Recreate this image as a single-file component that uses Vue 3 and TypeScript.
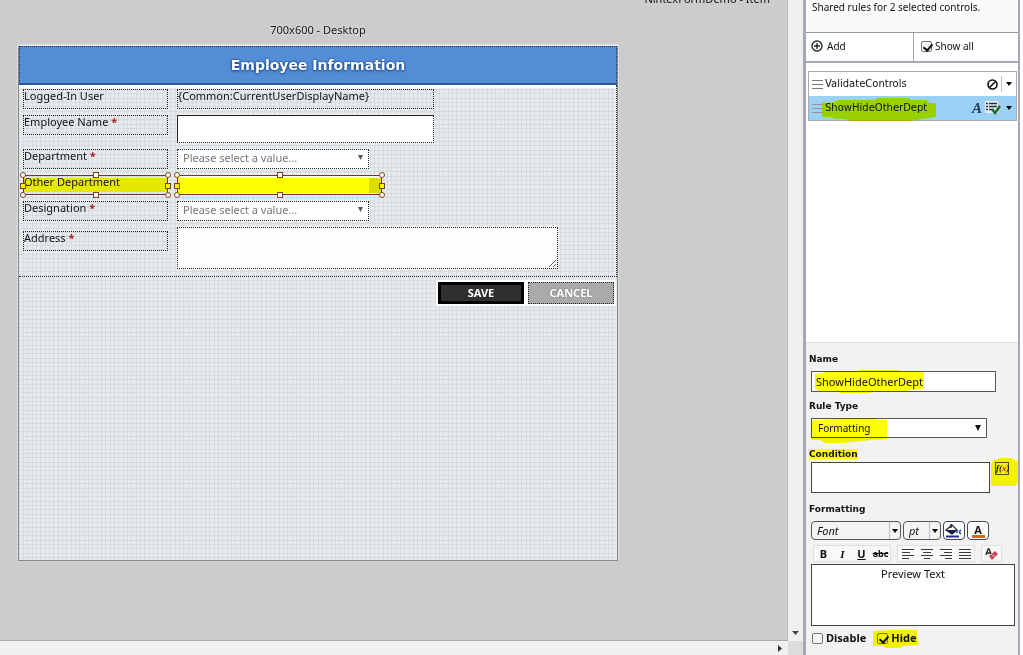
<script setup lang="ts">
import { ref } from 'vue'

interface FormRow {
  id: string
  label: string
  required?: boolean
  kind: 'text' | 'input' | 'select' | 'textarea'
  selected?: boolean
}

const rows: FormRow[] = [
  { id: 'user', label: 'Logged-In User', kind: 'text' },
  { id: 'name', label: 'Employee Name', required: true, kind: 'input' },
  { id: 'dept', label: 'Department', required: true, kind: 'select' },
  { id: 'other', label: 'Other Department', kind: 'input', selected: true },
  { id: 'desig', label: 'Designation', required: true, kind: 'select' },
  { id: 'addr', label: 'Address', required: true, kind: 'textarea' },
]
const handles = ['nw', 'n', 'ne', 'e', 'se', 's', 'sw', 'w']
const aligns = [
  { name: 'Align left', d: 'M0 .5h12M0 3.5h8M0 6.5h12M0 9.5h7' },
  { name: 'Center', d: 'M0 .5h12M2 3.5h8M0 6.5h12M3 9.5h6' },
  { name: 'Align right', d: 'M0 .5h12M4 3.5h8M0 6.5h12M5 9.5h7' },
  { name: 'Justify', d: 'M0 .5h12M0 3.5h12M0 6.5h12M0 9.5h12' },
]

const userToken = '{Common:CurrentUserDisplayName}'
const ruleName = ref('ShowHideOtherDept')
const condition = ref('')
const showAll = ref(true)
const disable = ref(false)
const hide = ref(true)
</script>

<template>
  <div class="app">
    <main class="workspace">
      <div class="viewport">
        <div class="doc-title"><span>NintexFormDemo - Item</span></div>
        <div class="stage">
          <div class="size-label">700x600 - Desktop</div>
          <form class="canvas" @submit.prevent>
            <h1 class="form-title">Employee Information</h1>
            <div class="fields">
              <div v-for="row in rows" :key="row.id" class="row" :class="'row-' + row.id">
                <label class="cell name-cell" :class="{ picked: row.selected }" :for="'f-' + row.id">
                  {{ row.label }} <b v-if="row.required">*</b>
                  <template v-if="row.selected">
                    <i v-for="h in handles" :key="h" class="handle" :class="h"></i>
                  </template>
                </label>
                <output v-if="row.kind === 'text'" :id="'f-' + row.id" class="cell token">{{ userToken }}</output>
                <div v-else-if="row.kind === 'select'" class="cell pick">
                  <select :id="'f-' + row.id"><option>Please select a value...</option></select>
                  <svg class="caret" width="5" height="5" viewBox="0 0 6 6"><path d="M0 0h6L3 6z" fill="#555" /></svg>
                </div>
                <textarea v-else-if="row.kind === 'textarea'" :id="'f-' + row.id" class="cell area"></textarea>
                <div v-else-if="row.selected" class="cell picked other">
                  <input :id="'f-' + row.id" type="text" />
                  <i v-for="h in handles" :key="h" class="handle" :class="h"></i>
                </div>
                <input v-else :id="'f-' + row.id" class="cell entry" type="text" />
              </div>
            </div>
            <div class="actions">
              <button class="save" type="submit">SAVE</button>
              <button class="cancel" type="button">CANCEL</button>
            </div>
          </form>
        </div>
      </div>
      <div class="vbar"><svg width="7" height="4" viewBox="0 0 7 4"><path d="M0 0h7L3.5 4z" fill="#444" /></svg></div>
      <div class="hbar"><svg width="4" height="7" viewBox="0 0 4 7"><path d="M0 0v7L4 3.5z" fill="#333" /></svg></div>
      <div class="corner"></div>
    </main>

    <aside class="panel">
      <p class="summary">Shared rules for 2 selected controls.</p>
      <div class="tools">
        <button class="add" type="button">
          <svg width="12" height="12" viewBox="0 0 12 12" fill="none" stroke="#1f2b26"><circle cx="6" cy="6" r="5" stroke-width="1.4" /><path d="M3 6h6M6 3v6" stroke-width="1.4" /></svg>
          <span>Add</span>
        </button>
        <label class="show-all"><input v-model="showAll" type="checkbox" /><span>Show all</span></label>
      </div>
      <div class="rules">
        <ul>
          <li>
            <svg width="11" height="9" viewBox="0 0 11 9"><path d="M0 .5h11M0 4.500h11M0 8.500h11" stroke="#777" /></svg>
            <span class="rule-name">ValidateControls</span>
            <svg width="11" height="11" viewBox="0 0 11 11" fill="none" stroke="#111" stroke-width="1.6"><circle cx="5.500" cy="5.500" r="4.500" /><path d="M2.500 8.500l6-6" /></svg>
            <button class="more" type="button" aria-label="Rule menu"><svg width="6" height="4" viewBox="0 0 6 4"><path d="M0 0h6L3 4z" /></svg></button>
          </li>
          <li class="current">
            <svg width="11" height="9" viewBox="0 0 11 9"><path d="M0 .5h11M0 4.500h11M0 8.500h11" stroke="#9a948c" /></svg>
            <span class="rule-name">ShowHideOtherDept</span>
            <span class="format-mark">A</span>
            <svg width="16" height="14" viewBox="0 0 16 14"><path d="M0 0h13v12H0z" fill="#e6edf0" /><path d="M1 2.500h2M1 5.500h2M1 8.500h2M4 2.500h8M4 5.500h8M4 8.500h4" stroke="#26323a" stroke-width="1.6" /><path d="M7 8l3 4 5-7" fill="none" stroke="#176b2c" stroke-width="2.400" /></svg>
            <button class="more" type="button" aria-label="Rule menu"><svg width="6" height="4" viewBox="0 0 6 4"><path d="M0 0h6L3 4z" /></svg></button>
            <svg class="marker mark-rule" viewBox="0 0 116 26" preserveAspectRatio="none"><path d="M1 6l12-1 4-2h36l4-2h30l4 2h14l4 3h6v14l-14 2-12 2H30l-6-2H14l-4-2H1z" /></svg>
          </li>
        </ul>
      </div>

      <section class="editor">
        <label class="caption" for="rule-name">Name</label>
        <div class="control name-box">
          <input id="rule-name" v-model="ruleName" type="text" />
          <svg class="marker mark-name" viewBox="0 0 111 25" preserveAspectRatio="none"><path d="M1 5l8-1 4-2h30l4-1h36l6 2h20l1 2v15l-14 1-6 2H60l-6 1H26l-4-2H6l-5-2z" /></svg>
        </div>
        <label class="caption" for="rule-type">Rule Type</label>
        <div class="control type-box">
          <select id="rule-type"><option>Formatting</option></select>
          <svg class="caret" width="6" height="6" viewBox="0 0 6 6"><path d="M0 0h6L3 6z" fill="#111" /></svg>
          <svg class="marker mark-type" viewBox="0 0 77 26" preserveAspectRatio="none"><path d="M2 3l20-1 8-1h34l4 2h9v19l-16 1-8 1-20 2H16l-6-3H1z" /></svg>
        </div>
        <label class="caption" for="condition"><span class="lit">Condition</span></label>
        <div class="condition-row">
          <textarea id="condition" v-model="condition"></textarea>
          <button class="fx" type="button" aria-label="Edit formula"><span>f(<em>x</em>)</span>
            <svg class="marker mark-fx" viewBox="0 0 28 30" preserveAspectRatio="none"><path d="M1 6l3-3 8-2h10l2 2 4 1v21l-3 4H1z" /></svg>
          </button>
        </div>
        <div class="caption">Formatting</div>
        <div class="bar">
          <div class="combo font"><select aria-label="Font"><option>Font</option></select><i><svg width="6" height="4" viewBox="0 0 6 4"><path d="M0 0h6L3 4z" /></svg></i></div>
          <div class="combo size"><select aria-label="Size"><option>pt</option></select><i><svg width="6" height="4" viewBox="0 0 6 4"><path d="M0 0h6L3 4z" /></svg></i></div>
          <button class="tint" type="button" aria-label="Fill color">
            <svg width="18" height="14" viewBox="0 0 18 14"><path d="M1 6l6-5 5 5-5 4z" fill="#fff" stroke="#142038" stroke-width="1.200" /><path d="M1 6h11l-5 4z" fill="#142038" /><path d="M6 0v4" stroke="#142038" stroke-width="1.400" /><path d="M12 6v3M16 6c-2 1-2 3 0 4" fill="none" stroke="#2545a0" stroke-width="1.500" /><path d="M1 12.500h13" stroke="#1b2f95" stroke-width="2" /></svg>
          </button>
          <button class="tint letter" type="button" aria-label="Text color"><span>A</span></button>
        </div>
        <div class="bar second">
          <div class="group">
            <button type="button"><b>B</b></button><button type="button"><b class="it">I</b></button><button type="button"><b class="un">U</b></button><button type="button"><b class="st">abc</b></button>
          </div>
          <div class="group">
            <button v-for="a in aligns" :key="a.name" type="button" :aria-label="a.name"><svg width="12" height="10" viewBox="0 0 12 10"><path :d="a.d" stroke="#3a3a3a" /></svg></button>
          </div>
          <div class="group">
            <button type="button" aria-label="Clear formatting"><svg width="13" height="12" viewBox="0 0 13 12"><path d="M1 7l2-6h1l2 5M1 5h4" fill="none" stroke="#222" stroke-width="1.300" /><path d="M4 8l6-5 3 3-6 6z" fill="#c4455a" /><path d="M6 6l4 3" stroke="#f0b0b8" /></svg></button>
          </div>
        </div>
        <div class="preview">Preview Text</div>
        <div class="checks">
          <label><input v-model="disable" type="checkbox" /><span>Disable</span></label>
          <label><input v-model="hide" type="checkbox" /><span>Hide</span>
            <svg class="marker mark-hide" viewBox="0 0 46 20" preserveAspectRatio="none"><path d="M1 2l20-1h24l1 15-14 1-4 2H14l-3-2H1z" /></svg>
          </label>
        </div>
      </section>
    </aside>
  </div>
</template>

<style>
body { margin: 0; background: #fff; }
</style>

<style scoped>
* { box-sizing: border-box; }
.app {
  display: flex;
  height: 100vh;
  padding-right: 3px;
  overflow: hidden;
  font: 11px/16px "Noto Sans", sans-serif;
  color: #111;
  background: #fff;
}
button, input, select, textarea {
  margin: 0;
  padding: 0;
  border: 0;
  border-radius: 0;
  font: inherit;
  color: inherit;
  background: none;
  outline: none;
}
select { appearance: none; width: 100%; height: 100%; }
svg { display: block; flex: none; }

.workspace {
  flex: 1;
  min-width: 0;
  display: grid;
  grid-template: minmax(0, 1fr) 14px / minmax(0, 1fr) 15px;
}
.viewport { overflow: hidden; background: #ccc; border-right: 1px solid #bbb; border-bottom: 1px solid #aaa; }
.doc-title {
  display: flex;
  justify-content: flex-end;
  align-items: flex-end;
  height: 7px;
  padding-right: 17px;
  overflow: hidden;
}
.vbar { background: #f0f0f0; display: flex; align-items: flex-end; justify-content: center; padding-bottom: 6px; }
.hbar { background: #f0f0f0; display: flex; align-items: center; justify-content: flex-end; padding-right: 6px; }
.corner { background: #dcdcdc; }

.stage { width: 600px; margin-left: 18px; }
.size-label { padding-top: 15px; height: 39px; text-align: center; text-shadow: 0 0 2px #fff; }
.canvas {
  height: 515px;
  border: 1px solid #888;
  border-top: 0;
  box-shadow: 0 -1px 2px #fff;
  background-color: #e6eaec;
  background-image:
    repeating-linear-gradient(90deg, #ced4d8a0 0 1px, transparent 1px 4px, #ced4d8a0 4px 5px, transparent 5px 8px, #ced4d8a0 8px 9px, transparent 9px 13px),
    repeating-linear-gradient(#ced4d8a0 0 1px, transparent 1px 4px, #ced4d8a0 4px 5px, transparent 5px 8px, #ced4d8a0 8px 9px, transparent 9px 13px);
}
.form-title {
  margin: 0;
  height: 39px;
  border: 1px dotted #17365f;
  border-bottom: 2px solid #285a9c;
  font: bold 14px/37px "DejaVu Sans", sans-serif;
  text-align: center;
  color: #fff;
  text-shadow: 0 0 2px #0a3577, 0 1px 3px #1c4d94;
  background: #538dd5;
}
.fields {
  display: flex;
  flex-direction: column;
  gap: 6px;
  height: 192px;
  padding: 4px 4px 0;
  border-right: 1px dotted #333;
  border-bottom: 1px dotted #333;
  box-shadow: inset 0 3px 2px #fff;
}
.row { display: grid; grid-template-columns: 145px auto; justify-content: start; align-items: start; column-gap: 9px; }
.cell { position: relative; display: block; height: 20px; border: 1px dotted #222; line-height: 11px; white-space: nowrap; box-shadow: 0 0 2px #fff; }
.name-cell b { color: #b01818; }
.token { width: 257px; }
.entry { width: 257px; height: 28px; background: #fff; border-style: solid dotted dotted solid; }
.pick { width: 192px; background: #fff; }
.pick select { padding: 0 0 3px 5px; color: #777; }
.caret { position: absolute; right: 5px; top: 5px; pointer-events: none; }
.area { width: 381px; height: 42px; background: #fdfdfd; }
.row-addr .name-cell { margin-top: 4px; }
.picked { border: 1px solid #7a3030; background: linear-gradient(#e6e800, #e6e800) 0 2px / 100% 14px no-repeat; }
.other { width: 205px; background: #f7f7ff linear-gradient(90deg, #ff0 191px, #d9dc00 191px) 0 2px / 100% 15px no-repeat; }
.other input { width: 100%; height: 100%; }
.handle { position: absolute; width: 6px; height: 6px; border: 1px solid #7a4420; background: #fff; }
.nw, .ne, .sw, .se { border-radius: 50%; }
.nw, .n, .ne { top: -4px; }
.sw, .s, .se { bottom: -4px; }
.e, .w { top: 7px; background: #f5f000; }
.nw, .w, .sw { left: -4px; }
.ne, .e, .se { right: -4px; }
.n, .s { left: calc(50% - 3px); }
.actions {
  display: flex;
  justify-content: flex-end;
  gap: 4px;
  padding: 5px 3px 0 0;
}
.actions button { width: 86px; height: 22px; font-weight: bold; line-height: 14px; color: #fff; box-shadow: 0 0 0 2px #fff; }
.save { border: 3px solid #000; background: #303030; }
.cancel { border: 1px dotted #222; background: #aaa; text-shadow: 0 0 2px #777; }

.panel {
  display: flex;
  flex-direction: column;
  width: 217px;
  border-left: 3px solid #a4a8b0;
  border-right: 2px solid #a4a8b0;
  background: #fff;
}
.summary { margin: 0; height: 32px; padding-left: 6px; font-size: 10px; line-height: 14px; background: #fafafa; }
.tools {
  display: grid;
  grid-template-columns: 108px 1fr;
  height: 31px;
  border-top: 1px solid #999ca4;
  border-bottom: 2px solid #a4a8b0;
  font-size: 10px;
}
.add, .show-all { display: flex; align-items: center; gap: 4px; padding-left: 5px; padding-bottom: 2px; }
.add { border-right: 1px solid #a4a8b0; }
.show-all { padding-left: 7px; gap: 3px; }
input[type="checkbox"] {
  appearance: none;
  width: 11px;
  height: 11px;
  border: 1px solid #777;
  border-radius: 2px;
  background: #f4f4f4;
}
input[type="checkbox"]:checked::after {
  content: "";
  display: block;
  width: 4px;
  height: 7px;
  margin: 0 0 0 3px;
  border: solid #111;
  border-width: 0 2px 2px 0;
  transform: rotate(40deg);
}
.rules { flex: 1; min-height: 0; padding: 8px 1px 0 2px; }
.rules ul { margin: 0; padding: 0; list-style: none; border: 1px solid #aaa; }
.rules li { position: relative; display: flex; align-items: center; height: 24px; padding-left: 3px; }
.rules .current { background: #99d1f7; }
.rule-name { flex: 1; padding-left: 2px; font: 10px/16px "DejaVu Sans", sans-serif; }
.format-mark { padding-right: 3px; font: italic bold 15px/16px "Liberation Serif", serif; color: #243d5e; }
.more { display: flex; align-items: center; justify-content: center; width: 15px; height: 16px; margin-left: 3px; border-left: 1px solid #bbc8d0; }
.current .more { margin-left: 0; }
.marker { position: absolute; mix-blend-mode: multiply; fill: #ff0; pointer-events: none; }
.mark-rule { left: 12px; top: 1px; width: 116px; height: 26px; }

.editor { padding: 8px 3px 9px 5px; background: #f2f2f2; border-top: 1px solid #ddd; }
.caption { display: block; margin-left: -2px; font: bold 9px/16px "DejaVu Sans", sans-serif; }
.lit { background: #ff0; }
.control { position: relative; margin: 4px 0 6px; border: 1px solid #555; background: #fff; }
.name-box { width: 185px; height: 21px; }
.name-box input { width: 100%; height: 100%; padding: 0 0 1px 4px; }
.mark-name { left: 2px; top: -3px; width: 111px; height: 25px; }
.type-box { width: 176px; height: 20px; margin-bottom: 8px; font-size: 10px; }
.type-box select { padding-left: 6px; }
.type-box .caret { top: 6px; }
.mark-type { left: -2px; top: -2px; width: 77px; height: 26px; }
.condition-row { display: flex; gap: 5px; margin-bottom: 8px; }
.condition-row textarea { width: 179px; height: 31px; border: 1px solid #444; background: #fff; resize: none; }
.fx { position: relative; width: 14px; height: 13px; border: 1px solid #555; font: italic bold 9px/11px "Liberation Serif", serif; color: #111; }
.fx em { color: #d22; }
.mark-fx { left: -6px; top: -6px; width: 28px; height: 30px; }
.bar { display: flex; gap: 2px; margin: 4px 0 5px; height: 19px; }
.combo { position: relative; border: 1px solid #555; border-radius: 4px; background: #f4f4f4; font-style: italic; }
.combo select { padding-left: 5px; }
.combo i { position: absolute; top: 0; right: 0; bottom: 0; width: 11px; display: flex; align-items: center; justify-content: center; border-left: 1px solid #bbb; pointer-events: none; }
.font { width: 90px; }
.size { width: 38px; }
.tint { display: flex; align-items: center; justify-content: center; width: 22px; height: 19px; border: 1px solid #445; border-radius: 4px; background: #fff; }
.letter span { width: 13px; height: 14px; border-bottom: 3px solid #d2691e; font-weight: bold; line-height: 11px; }
.second { gap: 6px; height: 17px; margin: 0 0 2px 2px; }
.group { display: flex; border: 1px solid #e0e0e0; background: #f8f8f8; }
.group button { display: flex; align-items: center; justify-content: center; width: 19px; line-height: 14px; }
.it { font-family: "Liberation Serif", serif; font-style: italic; }
.un { text-decoration: underline; }
.st { font-size: 9px; text-decoration: line-through; }
.preview { height: 62px; border: 1px solid #444; background: #fff; text-align: center; line-height: 18px; }
.checks { display: flex; gap: 11px; margin-top: 4px; padding-left: 1px; font-weight: bold; }
.checks label { position: relative; display: flex; align-items: center; gap: 3px; }
.mark-hide { left: -5px; top: -1px; width: 46px; height: 20px; }
</style>
